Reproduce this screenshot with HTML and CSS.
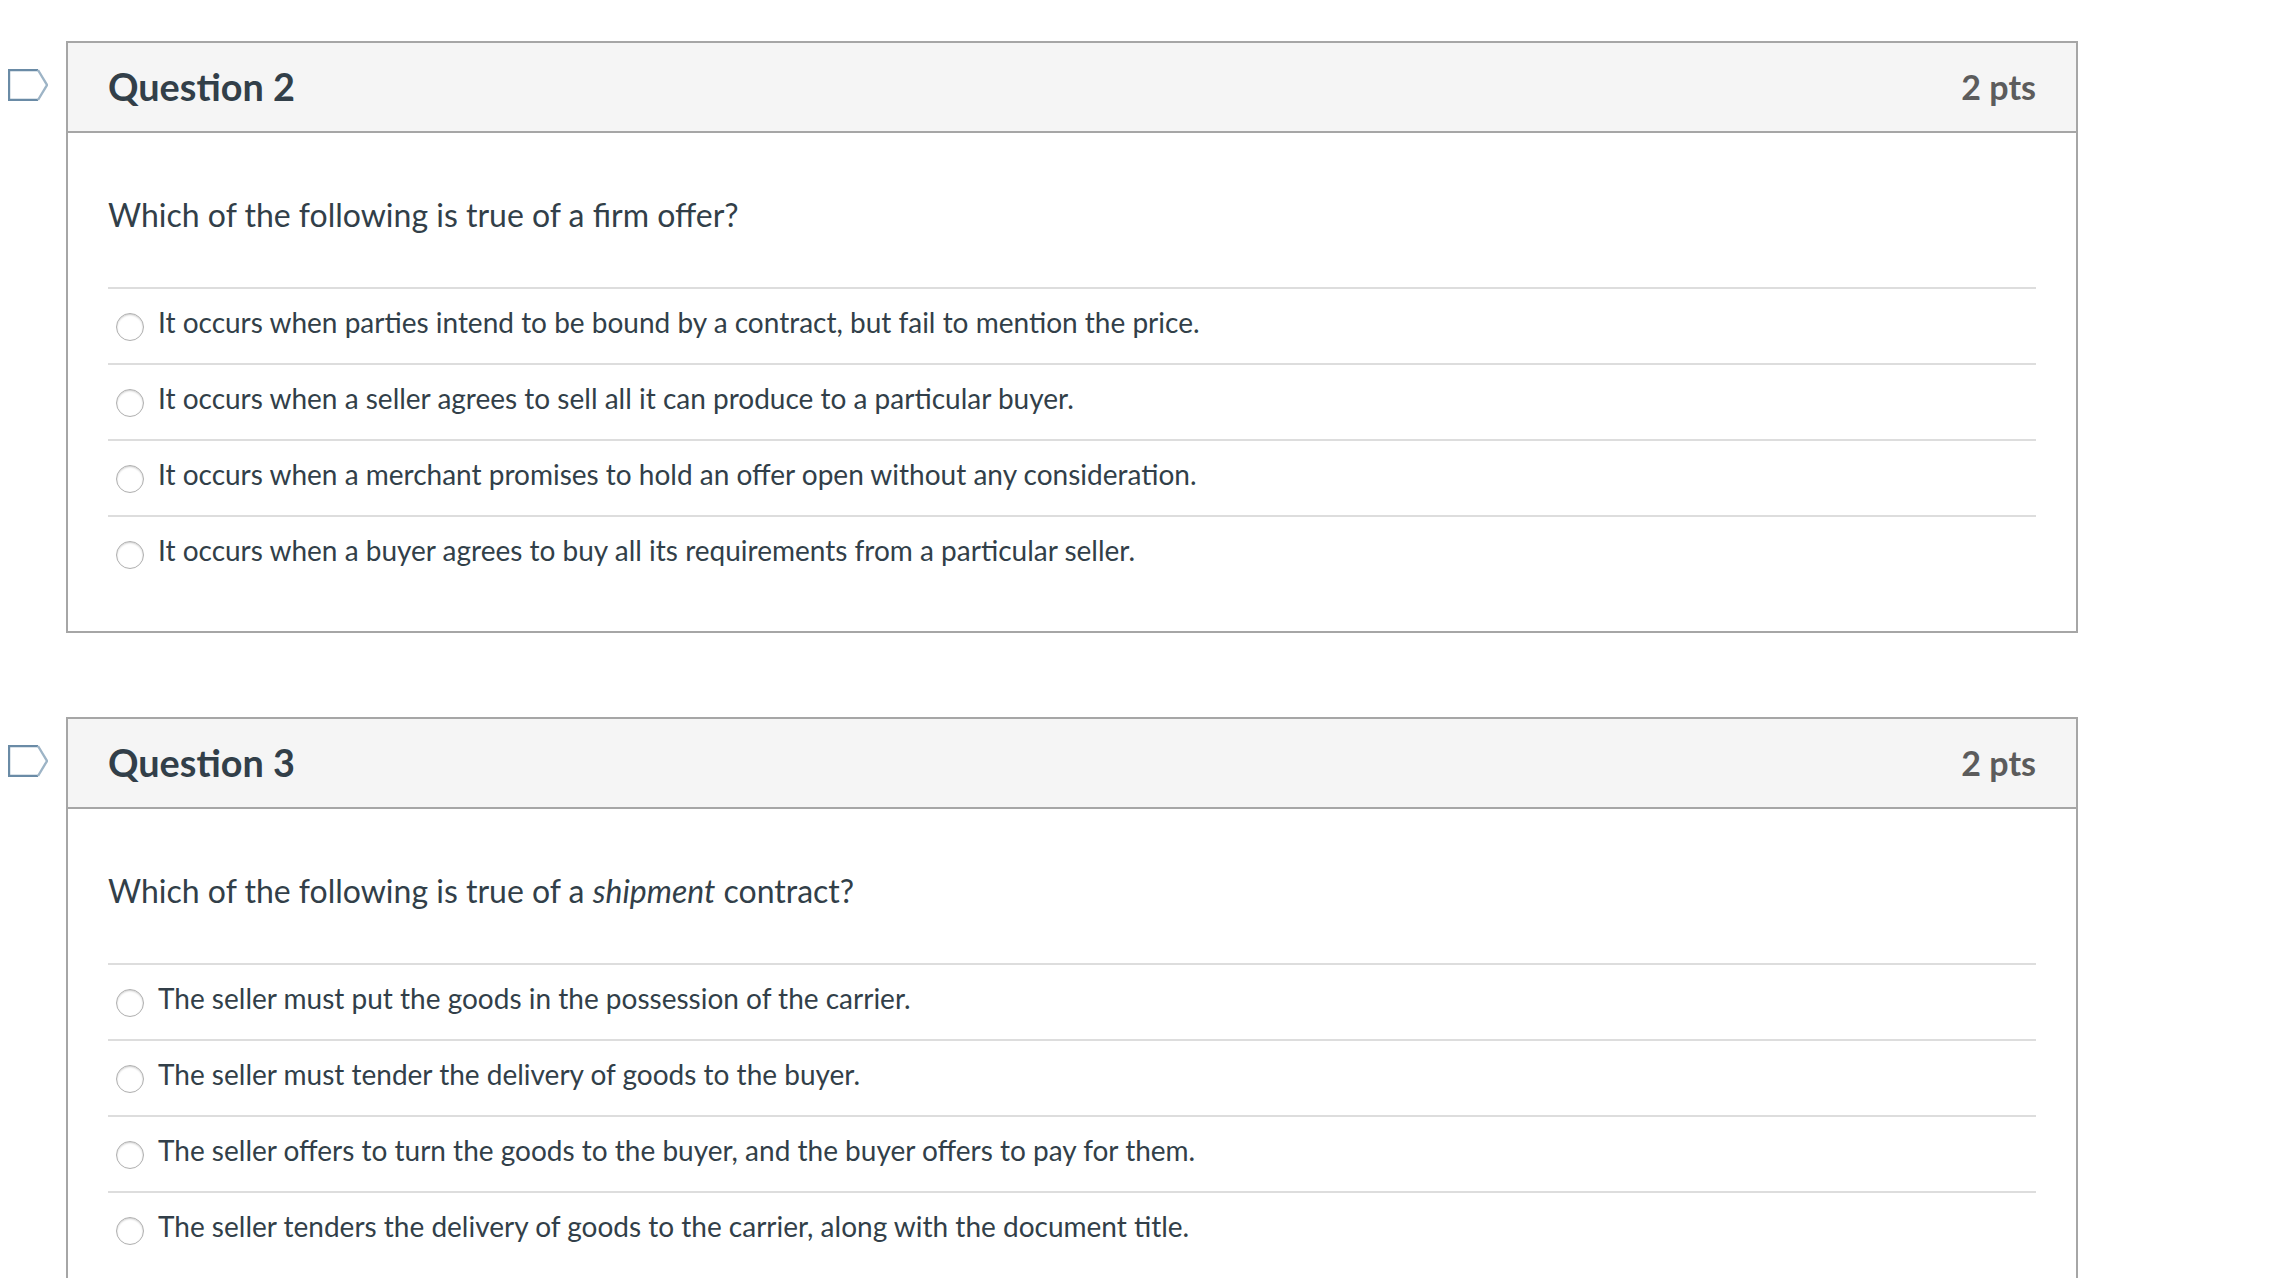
FILE: index.html
```html
<!DOCTYPE html>
<html lang="en">
<head>
<meta charset="utf-8">
<title>Quiz</title>
<link rel="stylesheet" href="styles.css">
</head>
<body>
<main class="quiz">
  <section class="question">
    <svg class="flag" viewBox="0 0 40 32" aria-hidden="true"><path d="M30 1H1V31H30"/><path class="flag-tip" d="M30 1L39 16L30 31"/></svg>
    <div class="card">
      <header class="card-head"><h2 class="title">Question 2</h2><span class="pts">2 pts</span></header>
      <div class="card-body">
        <p class="prompt">Which of the following is true of a firm offer?</p>
        <ul class="answers">
          <li class="answer"><span class="radio"></span><span class="label">It occurs when parties intend to be bound by a contract, but fail to mention the price.</span></li>
          <li class="answer"><span class="radio"></span><span class="label">It occurs when a seller agrees to sell all it can produce to a particular buyer.</span></li>
          <li class="answer"><span class="radio"></span><span class="label">It occurs when a merchant promises to hold an offer open without any consideration.</span></li>
          <li class="answer"><span class="radio"></span><span class="label">It occurs when a buyer agrees to buy all its requirements from a particular seller.</span></li>
        </ul>
      </div>
    </div>
  </section>
  <section class="question">
    <svg class="flag" viewBox="0 0 40 32" aria-hidden="true"><path d="M30 1H1V31H30"/><path class="flag-tip" d="M30 1L39 16L30 31"/></svg>
    <div class="card">
      <header class="card-head"><h2 class="title">Question 3</h2><span class="pts">2 pts</span></header>
      <div class="card-body">
        <p class="prompt">Which of the following is true of a <em>shipment</em> contract?</p>
        <ul class="answers">
          <li class="answer"><span class="radio"></span><span class="label">The seller must put the goods in the possession of the carrier.</span></li>
          <li class="answer"><span class="radio"></span><span class="label">The seller must tender the delivery of goods to the buyer.</span></li>
          <li class="answer"><span class="radio"></span><span class="label">The seller offers to turn the goods to the buyer, and the buyer offers to pay for them.</span></li>
          <li class="answer"><span class="radio"></span><span class="label">The seller tenders the delivery of goods to the carrier, along with the document title.</span></li>
        </ul>
      </div>
    </div>
  </section>
</main>
</body>
</html>
```
FILE: styles.css
```css
* { box-sizing: border-box; }
html, body { margin: 0; height: 100%; background: #fff; overflow: hidden; }
body { font-family: Lato, "Open Sans", sans-serif; color: #323f49; text-rendering: optimizeLegibility; font-feature-settings: "liga" 1; }
.quiz { display: flex; flex-direction: column; gap: 84px; padding: 41px 0 0 8px; width: 2078px; }
.question { display: flex; align-items: flex-start; }
.flag { width: 40px; height: 32px; margin: 28px 18px 0 0; flex: none; fill: none; stroke: #6a8ba6; stroke-width: 2.4; }
.flag-tip { stroke: #9db4c6; }
.card { flex: 1; border: 2px solid #a6a6a6; }
.card-head { display: flex; justify-content: space-between; align-items: center; height: 90px; padding: 0 40px 1px; background: #f5f5f5; border-bottom: 2px solid #a6a6a6; }
.title { margin: 0; font-size: 37.8px; font-weight: 700; }
.pts { font-size: 34px; font-weight: 700; color: #5c5c5c; }
.card-body { padding: 0 40px 40px; }
.prompt { margin: 0; height: 154px; padding-top: 58px; font-size: 32px; line-height: 48px; }
.answers { list-style: none; margin: 0; padding: 0; }
.answer { display: flex; align-items: center; height: 76px; border-top: 2px solid #ddd; font-size: 28px; }
.radio { width: 28px; height: 28px; margin: 1px 14px 0 8px; flex: none; border-radius: 50%; border: 1.5px solid #b0b0b0; background: #fff; box-shadow: inset 0 1px 2px rgba(0,0,0,.2); }
.label { position: relative; top: -4px; }
```
